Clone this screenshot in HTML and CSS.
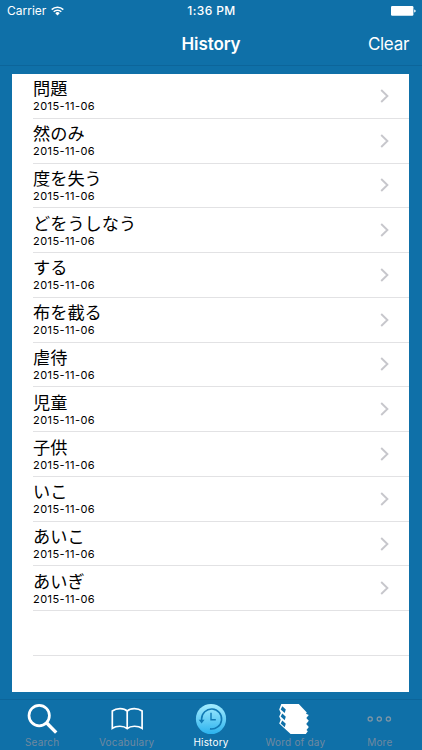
FILE: index.html
```html
<!DOCTYPE html>
<html lang="en">
    <head>
        <meta charset="UTF-8">
        <meta name="viewport" content="width=device-width, initial-scale=1.0">
        <title>History</title>
        <link rel="stylesheet" href="styles.css">
    </head>
    <body>
        <div class="status-bar">
            <div class="carrier">
                <span>Carrier</span>
                <svg class="wifi" width="13" height="10" viewBox="0 0 13 10" fill="none" stroke="#fff" stroke-width="1.5">
                    <path d="M.7 3.6a8.2 8.2 0 0 1 11.6 0"/>
                    <path d="M2.7 5.7a5.4 5.4 0 0 1 7.6 0"/>
                    <path d="M6.5 9.4 4.3 7.2a3.1 3.1 0 0 1 4.4 0z" fill="#fff" stroke="none"/>
                </svg>
            </div>
            <span class="time">1:36 PM</span>
            <svg class="battery" width="25" height="10" viewBox="0 0 25 10" fill="#fff">
                <rect x="0" y="0" width="22.4" height="9.8" rx="1.2"/>
                <path d="M23.2 3.4q1.5.3 1.5 1.5t-1.5 1.5z"/>
            </svg>
        </div>
        <div class="nav-bar">
            <h1 class="title">History</h1>
            <a href="#" class="clear">Clear</a>
        </div>
        <ul class="list" lang="ja">
            <li class="list-item"><div class="text"><p class="word">問題</p><p class="date">2015-11-06</p></div><svg class="arrow" viewBox="0 0 9 14"><path d="M1.2 1 7.4 7l-6.2 6"/></svg></li>
            <li class="list-item"><div class="text"><p class="word">然のみ</p><p class="date">2015-11-06</p></div><svg class="arrow" viewBox="0 0 9 14"><path d="M1.2 1 7.4 7l-6.2 6"/></svg></li>
            <li class="list-item"><div class="text"><p class="word">度を失う</p><p class="date">2015-11-06</p></div><svg class="arrow" viewBox="0 0 9 14"><path d="M1.2 1 7.4 7l-6.2 6"/></svg></li>
            <li class="list-item"><div class="text"><p class="word">どをうしなう</p><p class="date">2015-11-06</p></div><svg class="arrow" viewBox="0 0 9 14"><path d="M1.2 1 7.4 7l-6.2 6"/></svg></li>
            <li class="list-item"><div class="text"><p class="word">する</p><p class="date">2015-11-06</p></div><svg class="arrow" viewBox="0 0 9 14"><path d="M1.2 1 7.4 7l-6.2 6"/></svg></li>
            <li class="list-item"><div class="text"><p class="word">布を截る</p><p class="date">2015-11-06</p></div><svg class="arrow" viewBox="0 0 9 14"><path d="M1.2 1 7.4 7l-6.2 6"/></svg></li>
            <li class="list-item"><div class="text"><p class="word">虐待</p><p class="date">2015-11-06</p></div><svg class="arrow" viewBox="0 0 9 14"><path d="M1.2 1 7.4 7l-6.2 6"/></svg></li>
            <li class="list-item"><div class="text"><p class="word">児童</p><p class="date">2015-11-06</p></div><svg class="arrow" viewBox="0 0 9 14"><path d="M1.2 1 7.4 7l-6.2 6"/></svg></li>
            <li class="list-item"><div class="text"><p class="word">子供</p><p class="date">2015-11-06</p></div><svg class="arrow" viewBox="0 0 9 14"><path d="M1.2 1 7.4 7l-6.2 6"/></svg></li>
            <li class="list-item"><div class="text"><p class="word">いこ</p><p class="date">2015-11-06</p></div><svg class="arrow" viewBox="0 0 9 14"><path d="M1.2 1 7.4 7l-6.2 6"/></svg></li>
            <li class="list-item"><div class="text"><p class="word">あいこ</p><p class="date">2015-11-06</p></div><svg class="arrow" viewBox="0 0 9 14"><path d="M1.2 1 7.4 7l-6.2 6"/></svg></li>
            <li class="list-item"><div class="text"><p class="word">あいぎ</p><p class="date">2015-11-06</p></div><svg class="arrow" viewBox="0 0 9 14"><path d="M1.2 1 7.4 7l-6.2 6"/></svg></li>
            <li class="list-item"></li>
        </ul>
        <div class="tab-bar">
            <a href="#" class="tab">
                <svg width="34" height="34" viewBox="0 0 34 34" fill="none" stroke="#fff">
                    <circle cx="14.2" cy="12.6" r="10.2" stroke-width="2.7"/>
                    <path d="M21.5 19.8 31.2 29.6" stroke-width="3.4"/>
                </svg>
                <span class="label">Search</span>
            </a>
            <a href="#" class="tab">
                <svg width="34" height="34" viewBox="0 0 34 34" fill="none" stroke="#fff" stroke-width="1.7">
                    <path d="M17.2 8.2C14 4.8 6.5 4.9 2.3 8v17.3c4-2.7 11.4-2.9 14.9.3 3.5-3.2 10.9-3 14.9-.3V8C27.9 4.9 20.4 4.8 17.2 8.2zv17.4"/>
                </svg>
                <span class="label">Vocabulary</span>
            </a>
            <a href="#" class="tab active">
                <svg width="34" height="34" viewBox="0 0 34 34" fill="none" stroke="#1179b4">
                    <defs>
                        <linearGradient id="clock" x1="0" y1="0" x2="0" y2="1">
                            <stop offset="0" stop-color="#a5edff"/>
                            <stop offset="1" stop-color="#2bb2ee"/>
                        </linearGradient>
                    </defs>
                    <circle cx="17" cy="16" r="15.1" fill="url(#clock)" stroke="none"/>
                    <path d="M7.6 17.3V16A10 10 0 1 1 16 25.9" stroke-width="1.6"/>
                    <path d="M4.7 16.8h5.8l-2.9 3.8z" fill="#1179b4" stroke="none"/>
                    <path d="M17 9.8v7h4.8" stroke-width="1.4"/>
                </svg>
                <span class="label">History</span>
            </a>
            <a href="#" class="tab">
                <svg width="34" height="34" viewBox="0 0 34 34">
                    <path d="M3.3 1H20.800L28.800 9.400l-.8 1.300 2.800 1.300-2.500 3.100 2.500 2.700-2.600 3.300 2.600 2.800-2.300 3.200 1.300 1.200-2 2.600H12.600L1.200 20.400l1.500-3.600L1.200 13.600l1.600-3.600L1.200 6.400z" fill="#fff"/>
                    <g fill="#0f70a8">
                        <path d="m4.300 3.300 3.500 3.300-1.100 3.500-4-3.700z"/>
                        <path d="m4.300 10.400 3.500 3.300-1.100 3.500-4-3.700z"/>
                        <path d="m4.300 17.500 3.500 3.200-1.100 3.500-4-3.700z"/>
                    </g>
                </svg>
                <span class="label">Word of day</span>
            </a>
            <a href="#" class="tab">
                <svg width="34" height="34" viewBox="0 0 34 34" fill="none" stroke="#7c95a6" stroke-width="1.3">
                    <circle cx="7.2" cy="16.1" r="2.1"/>
                    <circle cx="16.3" cy="16.1" r="2.1"/>
                    <circle cx="25.4" cy="16.1" r="2.1"/>
                </svg>
                <span class="label">More</span>
            </a>
        </div>
    </body>
</html>
```

FILE: styles.css
```css
*{
    box-sizing: border-box;
}

body{
    display: flex;
    flex-direction: column;
    height: 750px;
    margin: 0;
    overflow: hidden;
    background-color: #0f70a8;
    font-family: Inter, "Noto Sans CJK JP", sans-serif;
    color: #fff;
}

a{
    color: inherit;
    text-decoration: none;
}

ul, p, h1{
    padding: 0;
    margin: 0;
    list-style: none;
}

svg{
    display: block;
    flex-shrink: 0;
}

.status-bar{
    display: grid;
    grid-template-columns: 1fr auto 1fr;
    align-items: center;
    height: 22px;
    padding: 0 6px 0 7px;
    font-size: 12px;
    line-height: 22px;
}

.carrier{
    display: flex;
    align-items: center;
    gap: 5px;
    letter-spacing: 0;
}

.time{
    font-weight: 500;
    font-size: 12px;
    letter-spacing: 0.4px;
}

.battery{
    justify-self: end;
}

.nav-bar{
    display: grid;
    grid-template-columns: 1fr auto 1fr;
    align-items: center;
    height: 44px;
    padding: 0 13px;
    border-bottom: 1px solid #0c659a;
}

.title{
    grid-column: 2;
    font-size: 17px;
    font-weight: 600;
    line-height: 42px;
    letter-spacing: -0.1px;
}

.clear{
    justify-self: end;
    font-size: 17px;
    line-height: 42px;
    letter-spacing: -0.3px;
}

.list{
    height: 618px;
    margin: 8px 13px 0 12px;
    background-color: #fff;
    color: #000;
}

.list-item{
    display: flex;
    align-items: center;
    height: 44.77px;
    margin-left: 21px;
    padding-right: 20px;
    border-bottom: 1px solid #e2e2e4;
}

.text{
    flex: 1;
}

.word{
    height: 20px;
    font-family: "Noto Sans CJK JP", sans-serif;
    font-size: 17.2px;
    font-weight: 400;
    line-height: 20px;
}

.date{
    height: 15px;
    font-size: 11px;
    font-weight: 400;
    line-height: 16px;
    letter-spacing: 0.45px;
}

.arrow{
    width: 9px;
    height: 14px;
    fill: none;
    stroke: #c7c7cc;
    stroke-width: 1.9;
}

.tab-bar{
    display: flex;
    height: 51px;
    margin-top: auto;
    border-top: 1px solid #0c659a;
}

.tab{
    display: flex;
    flex: 1;
    flex-direction: column;
    align-items: center;
    padding-top: 3px;
    color: #7089a0;
}

.label{
    font-size: 10px;
    line-height: 11px;
    letter-spacing: 0.2px;
    white-space: nowrap;
}

.tab.active{
    color: #fff;
}
```
